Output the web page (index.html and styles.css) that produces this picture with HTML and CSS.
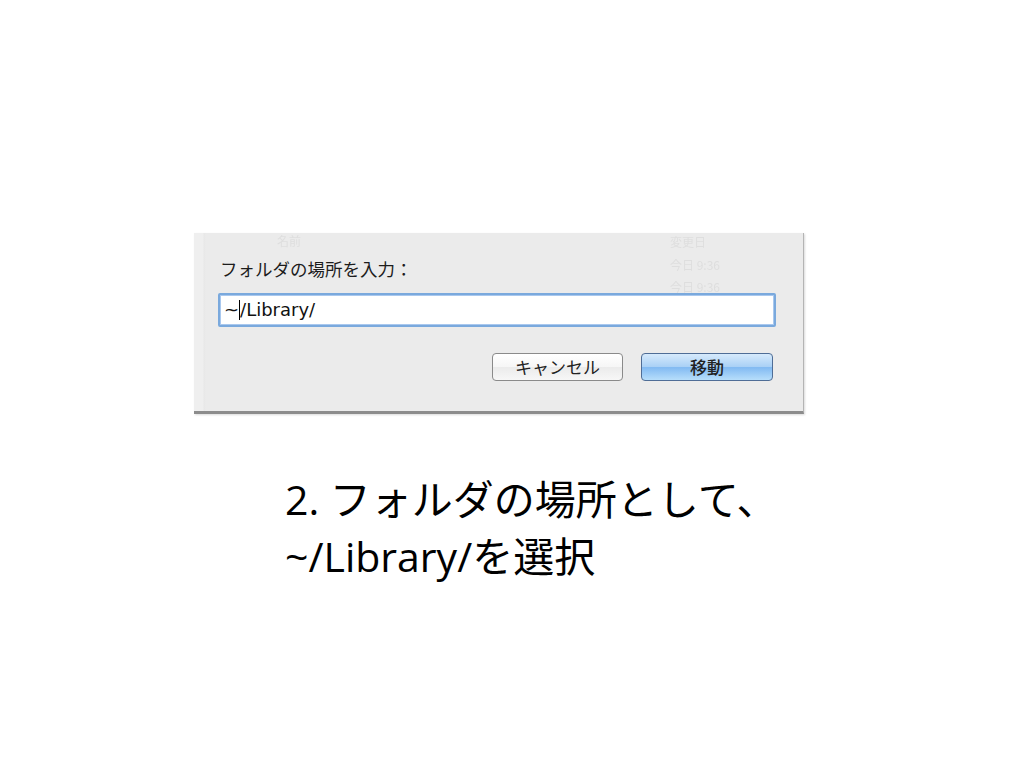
FILE: index.html
```html
<!DOCTYPE html>
<html lang="ja">
<head>
    <meta charset="UTF-8">
    <meta name="viewport" content="width=device-width, initial-scale=1.0">
    <title>フォルダの場所を入力</title>
    <link rel="stylesheet" href="styles.css">
</head>
<body>
    <main class="slide">
        <section class="dialog">
            <div class="ghost">
                <span class="ghost-name">名前</span>
                <span class="ghost-date">変更日</span>
                <span class="ghost-time1">今日 9:36</span>
                <span class="ghost-time2">今日 9:36</span>
            </div>
            <label class="dialog-label" for="path">フォルダの場所を入力：</label>
            <div class="path-field" id="path">~<span class="caret"></span>/Library/</div>
            <div class="button-row">
                <button class="btn btn-cancel" type="button">キャンセル</button>
                <button class="btn btn-go" type="button">移動</button>
            </div>
        </section>
        <p class="caption">2. フォルダの場所として、<br>~/Library/を選択</p>
    </main>
</body>
</html>
```

FILE: styles.css
```css
body {
    margin: 0;
    background: #fff;
    font-family: "Noto Sans CJK JP", sans-serif;
}
.slide {
    width: 1024px;
    height: 768px;
    padding-top: 233px;
    box-sizing: border-box;
}
.dialog {
    position: relative;
    margin-left: 194px;
    width: 610px;
    height: 181px;
    box-sizing: border-box;
    padding: 26px 27px 0 24px;
    background: linear-gradient(90deg, #efefef 0, #efefef 9px, #e8e8e8 10px, #ebebeb 12px, #ebebeb 100%);
    border-right: 1px solid #b4b4b4;
    border-bottom: 3px solid #8c8c8c;
    box-shadow: 1px 1px 2px rgba(0, 0, 0, 0.15);
}
.ghost {
    position: absolute;
    inset: 0;
    font-size: 12px;
    line-height: 14px;
    color: #dedede;
    filter: blur(0.6px);
}
.ghost span {
    position: absolute;
}
.ghost-name { left: 83px; top: 1px; }
.ghost-date { left: 476px; top: 2px; }
.ghost-time1 { left: 476px; top: 25px; }
.ghost-time2 { left: 476px; top: 47px; }
.dialog-label {
    position: relative;
    display: block;
    margin-left: 2px;
    font-size: 17.5px;
    line-height: 20px;
    color: #1c1c1c;
}
.path-field {
    position: relative;
    margin-top: 14px;
    height: 34px;
    box-sizing: border-box;
    padding-left: 4px;
    background: #fff;
    border: 2px solid #7aa9dd;
    border-radius: 2px;
    box-shadow: inset 0 0 0 1px #a9c8ee;
    font-family: "DejaVu Sans", sans-serif;
    font-size: 18px;
    line-height: 29px;
    color: #111;
}
.caret {
    display: inline-block;
    width: 0;
    height: 20px;
    border-left: 1px solid #000;
    vertical-align: -4px;
}
.button-row {
    position: relative;
    display: flex;
    justify-content: flex-end;
    gap: 18px;
    margin-top: 26px;
    padding-right: 3px;
}
.btn {
    height: 28px;
    padding: 0;
    border-radius: 4px;
    font-family: "Noto Sans CJK JP", sans-serif;
    font-size: 17px;
    line-height: 24px;
    color: #222;
}
.btn-cancel {
    width: 131px;
    border: 1px solid #8a8a8a;
    background: linear-gradient(#ffffff, #f6f6f6 50%, #ebebeb 52%, #f7f7f7);
}
.btn-go {
    width: 132px;
    border: 1px solid #4f6d96;
    background: linear-gradient(#d6eafc, #a9d0f5 50%, #82baf2 52%, #b7defb);
    font-weight: 500;
}
.caption {
    margin: 57px 0 0 285px;
    font-family: "Open Sans", "Noto Sans CJK JP", sans-serif;
    font-size: 41px;
    line-height: 57px;
    color: #000;
}
```
